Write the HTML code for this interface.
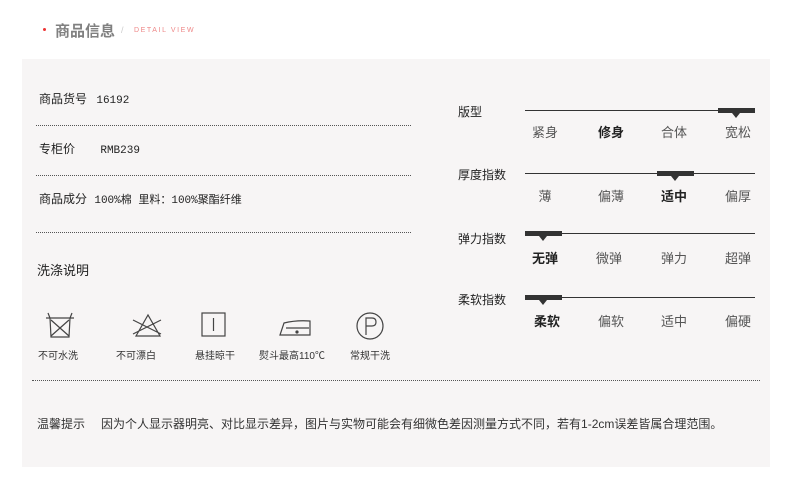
<!DOCTYPE html>
<html><head><meta charset="utf-8"><style>
*{margin:0;padding:0;box-sizing:border-box}
body{width:790px;height:483px;background:#fff;position:relative;font-family:"Liberation Sans","Noto Sans CJK SC",sans-serif;color:#333;overflow:hidden}
.a{position:absolute;white-space:nowrap}
.panel{position:absolute;left:22px;top:59px;width:748px;height:408px;background:#f7f5f5}
.dot{position:absolute;height:0;border-top:1px dotted #555}
.t{font-size:12px;color:#222}
.m{font-family:"Liberation Mono","Noto Sans CJK SC",monospace;font-size:11px}
.line{position:absolute;left:525px;width:230px;height:1px;background:#333}
.mk{position:absolute;width:37px;height:5px;background:#333}
.mk:after{content:"";position:absolute;left:14px;top:5px;border-left:4px solid transparent;border-right:4px solid transparent;border-top:5px solid #333}
.lb{position:absolute;font-size:13px;color:#555;width:40px;text-align:center}
.b{color:#222;font-weight:bold}
.ic{position:absolute;font-size:10px;color:#333}
</style></head><body>
<div class="a" style="left:43px;top:28px;width:3px;height:3px;background:#e33;border-radius:50%"></div>
<div class="a" style="left:55px;top:20px;font-size:15px;color:#808080;font-weight:bold">商品信息</div>
<div class="a" style="left:121px;top:25px;font-size:9px;color:#ccc">/</div>
<div class="a" style="left:134px;top:27px;font-size:7px;color:#e88;letter-spacing:1.6px">DETAIL VIEW</div>
<div class="panel"></div>
<div class="a t" style="left:39px;top:90px">商品货号 <span class="m" style="margin-left:6px">16192</span></div>
<div class="dot" style="left:36px;top:125px;width:375px"></div>
<div class="a t" style="left:39px;top:140px">专柜价 <span class="m" style="margin-left:22px">RMB239</span></div>
<div class="dot" style="left:36px;top:175px;width:375px"></div>
<div class="a t" style="left:39px;top:190px">商品成分 <span class="m" style="margin-left:4px">100%棉 里料：100%聚酯纤维</span></div>
<div class="dot" style="left:36px;top:232px;width:375px"></div>
<div class="a t" style="left:37px;top:260px;font-size:13px">洗涤说明</div>
<svg class="a" style="left:40px;top:308px" width="360" height="36" fill="none" stroke="#444" stroke-width="1.2">
<path d="M8 5 L10 10 L11 29 L29 29 L30 10 L32 5 M6 10 L34 10"/>
<path d="M11 12 L29 28 M29 12 L11 28"/>
<path d="M96 28 L108 7 L120 28 Z M93 12 L121 26 M121 12 L93 26"/>
<rect x="162" y="5" width="23" height="23"/><path d="M173.5 10 V23"/>
<path d="M240 27 L244 15 Q256 12 270 13 L270 27 Z M246 20 L269 20"/><circle cx="257" cy="24" r="1" fill="#444"/>
<circle cx="330" cy="18" r="13"/><path d="M326 27 V10 H332 Q336 10 336 14 Q336 18 332 18 H326"/>
</svg>
<div class="ic" style="left:38px;top:347px">不可水洗</div>
<div class="ic" style="left:116px;top:347px">不可漂白</div>
<div class="ic" style="left:195px;top:347px">悬挂晾干</div>
<div class="ic" style="left:259px;top:347px">熨斗最高110℃</div>
<div class="ic" style="left:350px;top:347px">常规干洗</div>
<div class="dot" style="left:32px;top:380px;width:728px"></div>
<div class="a" style="left:37px;top:415px;font-size:12px;color:#333">温馨提示<span style="margin-left:16px">因为个人显示器明亮、对比显示差异，图片与实物可能会有细微色差因测量方式不同，若有1-2cm误差皆属合理范围。</span></div>

<div class="a t" style="left:458px;top:103px">版型</div>
<div class="line" style="top:110px"></div><div class="mk" style="left:718px;top:108px"></div>
<div class="lb" style="left:525px;top:122px">紧身</div><div class="lb b" style="left:591px;top:122px">修身</div><div class="lb" style="left:654px;top:122px">合体</div><div class="lb" style="left:718px;top:122px">宽松</div>

<div class="a t" style="left:458px;top:166px">厚度指数</div>
<div class="line" style="top:173px"></div><div class="mk" style="left:657px;top:171px"></div>
<div class="lb" style="left:525px;top:186px">薄</div><div class="lb" style="left:591px;top:186px">偏薄</div><div class="lb b" style="left:654px;top:186px">适中</div><div class="lb" style="left:718px;top:186px">偏厚</div>

<div class="a t" style="left:458px;top:230px">弹力指数</div>
<div class="line" style="top:233px"></div><div class="mk" style="left:525px;top:231px"></div>
<div class="lb b" style="left:525px;top:248px">无弹</div><div class="lb" style="left:589px;top:248px">微弹</div><div class="lb" style="left:654px;top:248px">弹力</div><div class="lb" style="left:718px;top:248px">超弹</div>

<div class="a t" style="left:458px;top:291px">柔软指数</div>
<div class="line" style="top:297px"></div><div class="mk" style="left:525px;top:295px"></div>
<div class="lb b" style="left:527px;top:311px">柔软</div><div class="lb" style="left:591px;top:311px">偏软</div><div class="lb" style="left:654px;top:311px">适中</div><div class="lb" style="left:718px;top:311px">偏硬</div>
</body></html>
